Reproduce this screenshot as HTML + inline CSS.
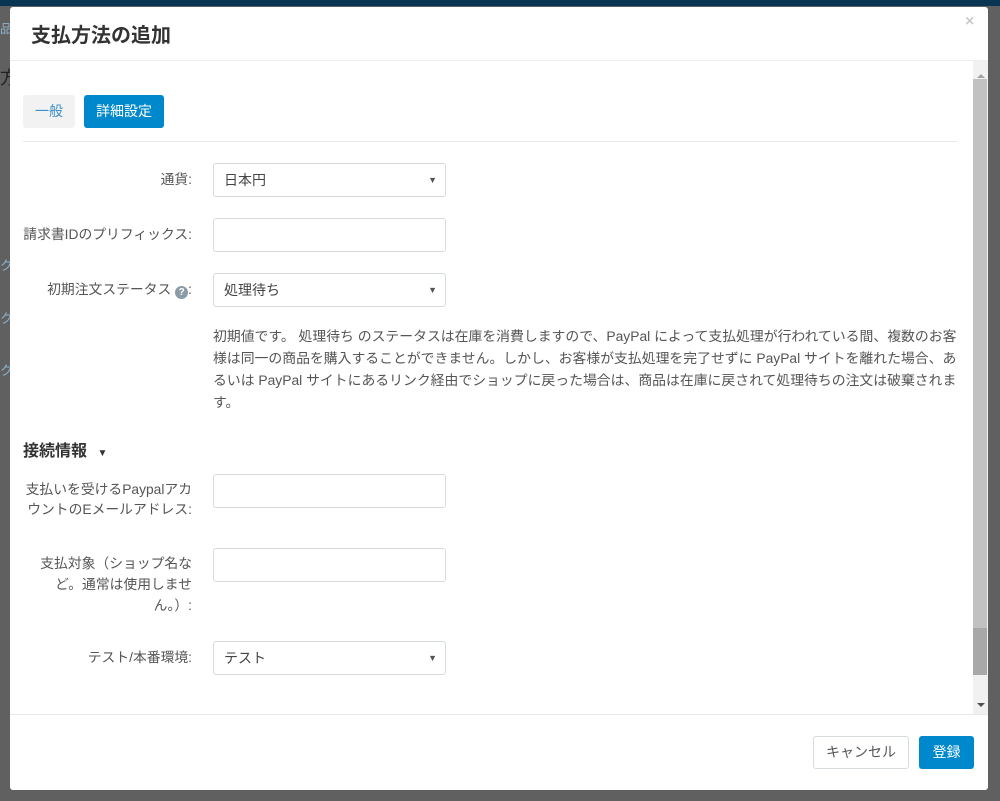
<!DOCTYPE html>
<html><head><meta charset="utf-8"><style>
*{box-sizing:border-box;margin:0;padding:0}
body{width:1000px;height:801px;background:#606060;position:relative;overflow:hidden;font-family:"Liberation Sans","Noto Sans CJK JP",sans-serif;font-size:14px;color:#555}
.a{position:absolute}
.topbar{left:0;top:0;width:1000px;height:6px;background:#0a3552}
.modal{left:10px;top:7px;width:978px;height:783px;background:#fff;border-radius:3px;overflow:hidden}
.lbl{text-align:right;width:182px;left:0;line-height:20px;font-size:13.8px;white-space:nowrap}
.inp{left:203px;width:233px;height:34px;border:1px solid #d6dbe0;border-radius:3px;background:#fff;padding:0 10px;line-height:32px;color:#444;font-size:14px}
.inp .car{position:absolute;right:8px;top:0;font-size:9px;color:#555}
.btn{height:33px;border-radius:3px;line-height:33px;text-align:center;font-size:14px}
</style></head><body>
<div class="a topbar"></div>
<div class="a" style="left:0;top:20px;color:#8fb3cf;font-size:12px">品</div>
<div class="a" style="left:0;top:64px;color:#222;font-size:18px">方</div>
<div class="a" style="left:0;top:255px;color:#8fb3cf;font-size:13px">ク</div>
<div class="a" style="left:0;top:308px;color:#8fb3cf;font-size:13px">ク</div>
<div class="a" style="left:0;top:360px;color:#8fb3cf;font-size:13px">ク</div>
<div class="a modal">
  <div class="a" style="left:21px;top:12px;font-size:20px;font-weight:bold;color:#333">支払方法の追加</div>
  <div class="a" style="left:955px;top:6px;font-size:16px;color:#ccc;font-weight:bold">×</div>
  <div class="a" style="left:0;top:53px;width:978px;height:1px;background:#eceeef"></div>
  <div class="a" style="left:963px;top:54px;width:15px;height:653px;background:#f1f1f1"></div>
  <div class="a" style="left:967px;top:67px;width:0;height:0;border-left:4px solid transparent;border-right:4px solid transparent;border-bottom:4px solid #a3a3a3"></div>
  <div class="a" style="left:963px;top:72px;width:14px;height:549px;background:#c1c1c1"></div>
  <div class="a" style="left:963px;top:621px;width:14px;height:47px;background:#a8a8a8"></div>
  <div class="a" style="left:967px;top:696px;width:0;height:0;border-left:4px solid transparent;border-right:4px solid transparent;border-top:4px solid #505050"></div>

  <div class="a btn" style="left:13px;top:88px;width:52px;background:#f2f2f2;color:#3d8fcc">一般</div>
  <div class="a btn" style="left:74px;top:88px;width:80px;background:#0088cc;color:#fff">詳細設定</div>
  <div class="a" style="left:13px;top:134px;width:934px;height:1px;background:#e6eaea"></div>

  <div class="a lbl" style="top:163px">通貨:</div>
  <div class="a inp" style="top:156px">日本円<span class="car">▼</span></div>
  <div class="a lbl" style="top:218px">請求書IDのプリフィックス:</div>
  <div class="a inp" style="top:211px"></div>
  <div class="a lbl" style="top:273px">初期注文ステータス <span style="display:inline-block;width:13px;height:13px;border-radius:50%;background:#8a9aa6;color:#fff;font-size:10px;line-height:13px;text-align:center;font-weight:bold;vertical-align:-1px">?</span>:</div>
  <div class="a inp" style="top:266px">処理待ち<span class="car">▼</span></div>
  <div class="a" style="left:203px;top:318px;width:760px;line-height:22px;color:#555;font-size:13.85px">初期値です。 処理待ち のステータスは在庫を消費しますので、PayPal によって支払処理が行われている間、複数のお客<br>様は同一の商品を購入することができません。しかし、お客様が支払処理を完了せずに PayPal サイトを離れた場合、あ<br>るいは PayPal サイトにあるリンク経由でショップに戻った場合は、商品は在庫に戻されて処理待ちの注文は破棄されま<br>す。</div>

  <div class="a" style="left:13px;top:430px;font-size:16px;font-weight:bold;color:#333">接続情報 <span style="font-size:10px;margin-left:6px">▼</span></div>

  <div class="a lbl" style="top:473px">支払いを受けるPaypalアカ<br>ウントのEメールアドレス:</div>
  <div class="a inp" style="top:467px"></div>
  <div class="a lbl" style="top:546px;line-height:21px">支払対象（ショップ名な<br>ど。通常は使用しませ<br>ん。）:</div>
  <div class="a inp" style="top:541px"></div>
  <div class="a lbl" style="top:641px">テスト/本番環境:</div>
  <div class="a inp" style="top:634px">テスト<span class="car">▼</span></div>

  <div class="a" style="left:0;top:707px;width:978px;height:1px;background:#e6eaea"></div>
  <div class="a btn" style="left:803px;top:729px;width:96px;border:1px solid #d6dbe0;color:#555;line-height:31px">キャンセル</div>
  <div class="a btn" style="left:909px;top:729px;width:55px;background:#0088cc;color:#fff">登録</div>
</div>
</body></html>
